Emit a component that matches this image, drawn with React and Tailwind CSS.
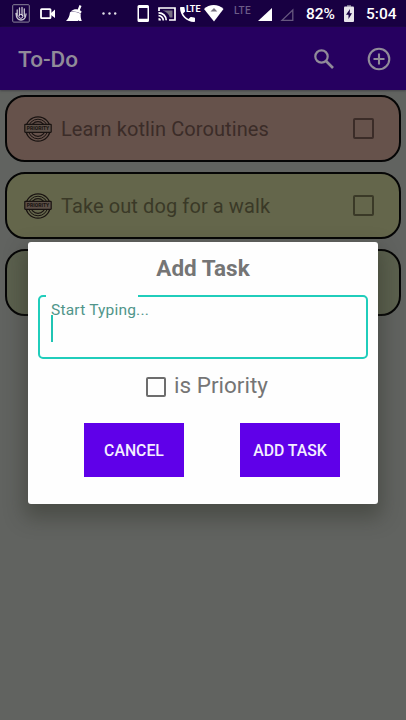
import React from "react";

function StatusBar() {
  return (
    <div className="flex h-[27px] w-full items-start bg-[#180042] text-white">
      <svg className="ml-[12px] mt-[4px] h-[19px] w-[18px] shrink-0" viewBox="0 0 18 19" fill="none">
        <rect x=".7" y=".7" width="16.6" height="17.4" rx="1" stroke="#8b8499" strokeWidth="1" />
        <path d="M5.2 6v6M7.5 4v7M10 3.5v7.500M12.300 5v7M4 9.500c.3 4 2 6.500 5 6.500s4.700-2.500 5-6" stroke="#c9c5d0" strokeWidth="1.300" strokeLinecap="round" />
        <circle cx="8.800" cy="12.300" r="2" stroke="#e8e6ec" strokeWidth="1" />
      </svg>
      <svg className="ml-[10px] mt-[8px] h-[12px] w-[15px] shrink-0" viewBox="0 0 15 12" fill="none">
        <rect x="1" y="1.200" width="9.500" height="9" rx=".6" stroke="#fff" strokeWidth="1.800" />
        <path d="M11 5l4-3.500v8.500l-4-3z" fill="#fff" />
      </svg>
      <svg className="ml-[11px] mt-[5px] h-[17px] w-[17px] shrink-0" viewBox="0 0 17 17" fill="#fff">
        <path d="M13.500 0l2 .9-1.700 4.300 1.700 1-.5 2.300C11.500 6.800 8.500 6 4.500 6.600 7.500 4.300 9.500 4 11.700 4.500z" />
        <path d="M4 7.300c3.500-1 7.500-.3 10.700 1.500-.2 2.500.1 5.200 1.100 7.200h-2.500l-.8-1-.3 1H0c2.400-2 3.500-5 4-8.700z" />
      </svg>
      <svg className="ml-[19px] mt-[12px] h-[3px] w-[15px] shrink-0" viewBox="0 0 15 3" fill="#e4e1e9">
        <circle cx="1.500" cy="1.500" r="1.200" /><circle cx="7.500" cy="1.500" r="1.200" /><circle cx="13.200" cy="1.500" r="1.200" />
      </svg>
      <svg className="ml-[20px] mt-[5px] h-[17px] w-[13px] shrink-0" viewBox="0 0 13 17">
        <path fillRule="evenodd" fill="#fff" d="M2 0h8.500a1.500 1.500 0 011.500 1.500v14a1.500 1.500 0 01-1.500 1.500H2a1.500 1.500 0 01-1.500-1.500v-14A1.500 1.500 0 012 0zM2 3v10.800h8.500V3z" />
      </svg>
      <svg className="ml-[8px] mt-[7px] h-[14px] w-[18px] shrink-0" viewBox="0 0 18 14" fill="none" stroke="#fff" strokeWidth="1.700">
        <path d="M1 4V1h16v12h-6" />
        <path d="M4.500 3.500h10v7h-2.700C11 7 8 4.500 4.500 3.500z" fill="#777083" stroke="none" />
        <path d="M.5 5.800a7.500 7.500 0 017.700 7.500M.5 8.700A4.700 4.700 0 015.300 13.400" />
        <path d="M.5 11a2.500 2.500 0 012.500 2.500H.5z" fill="#fff" stroke="none" />
      </svg>
      <div className="relative ml-[4px] mt-[4px] h-[19px] w-[22px] shrink-0">
        <svg className="absolute left-0 top-[3px] h-[15px] w-[15px]" viewBox="3 3 18 18" fill="#fff">
          <path d="M6.620 10.790c1.440 2.830 3.760 5.140 6.590 6.590l2.200-2.200c.27-.27.67-.36 1.020-.24 1.120.37 2.330.57 3.570.57.55 0 1 .45 1 1V20c0 .55-.45 1-1 1-9.390 0-17-7.610-17-17 0-.55.45-1 1-1h3.500c.55 0 1 .45 1 1 0 1.250.2 2.450.57 3.570.11.35.03.74-.25 1.020l-2.200 2.200z" />
        </svg>
        <span className="absolute left-[6px] top-0 text-[9px] font-bold leading-[10px]">LTE</span>
      </div>
      <svg className="ml-[2px] mt-[5px] h-[17px] w-[20px] shrink-0" viewBox="0 0 20 17">
        <path d="M0 4C5-1.200 14.500-1.200 19.500 4L10 16.500z" fill="#fff" />
        <path d="M6.500 6.500L10 3l3.300 3.500z" fill="#77727f" />
      </svg>
      <span className="ml-[10px] mt-[5px] w-[20px] shrink-0 text-[10px] font-medium leading-[12px] tracking-[.3px] text-[#6b5c87]">LTE</span>
      <svg className="ml-[4px] mt-[8px] h-[13px] w-[14px] shrink-0" viewBox="0 0 14 13"><path d="M14 0v13H0z" fill="#fff" /></svg>
      <svg className="ml-[8px] mt-[8px] h-[13px] w-[14px] shrink-0" viewBox="0 0 14 13"><path d="M12.800 2v10.300H2z" fill="none" stroke="#66577f" strokeWidth="1.300" /></svg>
      <span className="ml-[12px] mt-[5px] w-[32px] shrink-0 whitespace-nowrap text-[15.500px] font-medium leading-[18px]">82%</span>
      <svg className="ml-[6px] mt-[5px] h-[17px] w-[10px] shrink-0" viewBox="0 0 10 17">
        <path d="M3 0h4v2H3z" fill="#77708a" />
        <rect y="1.500" width="10" height="15.500" rx="1" fill="#e7e5ea" />
        <path d="M6 4L2 9.800h2.500V14L8 8.300H5.700z" fill="#180042" />
      </svg>
      <span className="ml-[12px] mt-[5px] shrink-0 whitespace-nowrap text-[15.500px] font-medium leading-[18px]">5:04</span>
    </div>
  );
}

function PriorityStamp() {
  return (
    <svg className="h-[28px] w-[28px] shrink-0 overflow-visible" viewBox="0 0 28 28" fill="none" stroke="#191311">
      <circle cx="14" cy="14" r="12.200" strokeWidth="1.300" />
      <circle cx="14" cy="14" r="9.800" strokeWidth="1" />
      <circle cx="14" cy="14" r="7.300" strokeWidth="1.200" />
      <rect x=".8" y="9.300" width="26.400" height="8" rx=".5" fill="#5d5048" strokeWidth="1.200" />
      <text x="14" y="15.200" textAnchor="middle" fill="#191311" stroke="none" fontSize="5" fontWeight="800">PRIORITY</text>
    </svg>
  );
}

function TaskCard({ color, ink, children }) {
  return (
    <div className={`flex h-[67px] w-[396px] shrink-0 items-center rounded-[20px] border-2 border-[#050505] pl-[17px] pr-[25px] ${color} ${ink}`}>
      {children && (
        <>
          <PriorityStamp />
          <span className="ml-[9px] mt-px grow whitespace-nowrap text-[20px] leading-6 tracking-[.1px]">{children}</span>
          <span className="h-[21px] w-[21px] rounded-[2px] border-2 border-current" />
        </>
      )}
    </div>
  );
}

function AddTaskDialog() {
  return (
    <div className="absolute left-[28px] top-[242px] flex h-[262px] w-[350px] flex-col items-center rounded-[3px] bg-[#fefefe] text-[#757575] shadow-[0_10px_20px_4px_rgba(40,42,32,0.4)]">
      <h2 className="mt-[12px] whitespace-nowrap text-[22.500px] font-bold leading-[28px]">Add Task</h2>
      <div className="relative mt-[13px] h-[64px] w-[330px] rounded-[5px] border-2 border-[#20cdbb]">
        <span className="absolute -top-[2px] left-[6px] h-[2px] w-[92px] bg-[#fefefe]" />
        <div className="ml-[11px] mt-[3px] whitespace-nowrap text-[15.500px] leading-[20px] tracking-[.2px] text-[#50958a]">Start Typing...</div>
        <span className="absolute left-[11px] top-[18px] h-[27px] w-[2px] bg-[#20c4b3]" />
      </div>
      <label className="mt-[12px] flex items-center pl-[8px]">
        <span className="mt-[3px] h-[20px] w-[20px] rounded-[2px] border-2 border-[#6d6d6d]" />
        <span className="ml-[8px] whitespace-nowrap text-[22.500px] leading-[28px]">is Priority</span>
      </label>
      <div className="mt-[24px] flex gap-[56px] pl-[18px]">
        <button className="h-[54px] w-[100px] whitespace-nowrap bg-[#5f00e9] pt-[2px] text-[15.800px] font-medium text-[#f4eeff]">CANCEL</button>
        <button className="h-[54px] w-[100px] whitespace-nowrap bg-[#5f00e9] pt-[2px] text-[15.800px] font-medium text-[#f4eeff]">ADD TASK</button>
      </div>
    </div>
  );
}

export default function App() {
  return (
    <div className="relative h-[720px] w-[406px] overflow-hidden bg-[#616360] font-['Roboto',sans-serif]">
      <StatusBar />
      <header className="flex h-[63px] items-center bg-[#260060] text-[#918b99] shadow-[0_1px_2px_#45454a]">
        <h1 className="ml-[18px] grow text-[22.500px] font-medium leading-7">To-Do</h1>
        <svg className="mr-[33px] h-[20px] w-[20px]" viewBox="0 0 20 20" fill="none" stroke="currentColor" strokeWidth="2.200">
          <circle cx="7.500" cy="7.500" r="6.200" /><path d="M12 12l7 7" strokeWidth="2.600" />
        </svg>
        <svg className="mr-[15px] h-[24px] w-[24px]" viewBox="0 0 24 24" fill="none" stroke="currentColor" strokeWidth="2.100">
          <circle cx="12" cy="12" r="10.300" /><path d="M12 6.500v11M6.500 12h11" />
        </svg>
      </header>
      <main className="flex flex-col gap-[10px] pl-[5px] pt-[5px]">
        <TaskCard color="bg-[#66524b]" ink="text-[#3b2c28]">Learn kotlin Coroutines</TaskCard>
        <TaskCard color="bg-[#64664b]" ink="text-[#3a3927]">Take out dog for a walk</TaskCard>
        <TaskCard color="bg-[#5b604e]" ink="text-[#343b2c]" />
      </main>
      <AddTaskDialog />
    </div>
  );
}
